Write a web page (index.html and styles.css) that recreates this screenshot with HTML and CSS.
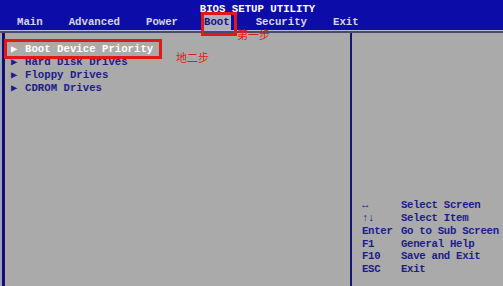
FILE: index.html
```html
<!DOCTYPE html>
<html>
<head>
	<title>BIOS SETUP UTILITY</title>
	<link rel="stylesheet" href="styles.css">
</head>
<body>
	<div class="screen">
		<div class="title">BIOS SETUP UTILITY</div>
		<div class="menubar">
			<span class="tab">Main</span>
			<span class="tab">Advanced</span>
			<span class="tab">Power</span>
			<span class="tab active">Boot</span>
			<span class="tab">Security</span>
			<span class="tab">Exit</span>
		</div>
		<div class="rule"></div>
		<div class="body">
			<div class="main">
				<div class="item selected"><span class="arrow">&#9654;</span>Boot Device Priority</div>
				<div class="item"><span class="arrow">&#9654;</span>Hard Disk Drives</div>
				<div class="item"><span class="arrow">&#9654;</span>Floppy Drives</div>
				<div class="item"><span class="arrow">&#9654;</span>CDROM Drives</div>
			</div>
			<div class="help">
				<div class="keys">
					<div class="key-row"><span class="key">&#8596;</span><span>Select Screen</span></div>
					<div class="key-row"><span class="key">&#8593;&#8595;</span><span>Select Item</span></div>
					<div class="key-row"><span class="key">Enter</span><span>Go to Sub Screen</span></div>
					<div class="key-row"><span class="key">F1</span><span>General Help</span></div>
					<div class="key-row"><span class="key">F10</span><span>Save and Exit</span></div>
					<div class="key-row"><span class="key">ESC</span><span>Exit</span></div>
				</div>
			</div>
		</div>

		<div class="mark mark-boot"></div>
		<div class="note note-one">第一步</div>
		<div class="mark mark-item"></div>
		<div class="note note-two">地二步</div>
	</div>
</body>
</html>
```

FILE: styles.css
```css
body {
	margin: 0;
	background-color: #ffffff;
	font-family: "Liberation Mono", "DejaVu Sans Mono", monospace;
	font-size: 10.7px;
	font-weight: bold;
	overflow: hidden;
}

.screen {
	position: relative;
	width: 503px;
	height: 286px;
	padding-top: 3px;
	box-sizing: border-box;
	display: flex;
	flex-direction: column;
	background-color: #0c0ca8;
}

.title {
	height: 12px;
	line-height: 12px;
	color: #ffffff;
	text-align: center;
	padding-left: 12px;
}

.menubar {
	display: flex;
	height: 15px;
	align-items: center;
	padding-left: 17px;
	color: #d8d8e8;
}

.tab {
	margin-right: 26px;
	line-height: 15px;
}

.tab.active {
	background-color: #b0b0b8;
	color: #10108a;
	padding: 0 1px;
	margin-left: -1px;
	margin-right: 25px;
}

.rule {
	height: 1px;
	background-color: #b8b8e0;
	border-bottom: 2px solid #4a4a6a;
}

.body {
	flex: 1;
	display: flex;
	background-color: #aaaaaa;
	border-left: 3px solid #101070;
	margin-left: 2px;
	box-shadow: -2px 0 0 #a0a0c0;
}

.main {
	width: 347px;
	box-sizing: border-box;
	padding: 10px 0 0 6px;
	border-right: 2px solid #16166e;
}

.item {
	height: 13px;
	line-height: 13px;
	color: #1c1c8c;
}

.item.selected {
	color: #ffffff;
}

.arrow {
	display: inline-block;
	width: 14px;
	font-size: 10.5px;
	vertical-align: top;
	line-height: 13px;
}

.help {
	flex: 1;
	display: flex;
	flex-direction: column;
	justify-content: flex-end;
	padding: 0 0 10px 10px;
	overflow: hidden;
	white-space: nowrap;
	letter-spacing: -0.3px;
}

.key-row {
	height: 12.8px;
	line-height: 12.8px;
	color: #1c1c8c;
}

.key {
	display: inline-block;
	width: 39px;
}

.mark {
	position: absolute;
	border: 3px solid #e01818;
}

.mark-boot {
	left: 201px;
	top: 12px;
	width: 30px;
	height: 18px;
}

.mark-item {
	left: 4px;
	top: 39px;
	width: 152px;
	height: 14px;
}

.note {
	position: absolute;
	color: #e01818;
	font-family: "Noto Sans CJK SC", sans-serif;
	font-size: 11px;
	font-weight: normal;
	line-height: 12px;
}

.note-one {
	left: 237px;
	top: 28px;
}

.note-two {
	left: 176px;
	top: 51px;
}
```
